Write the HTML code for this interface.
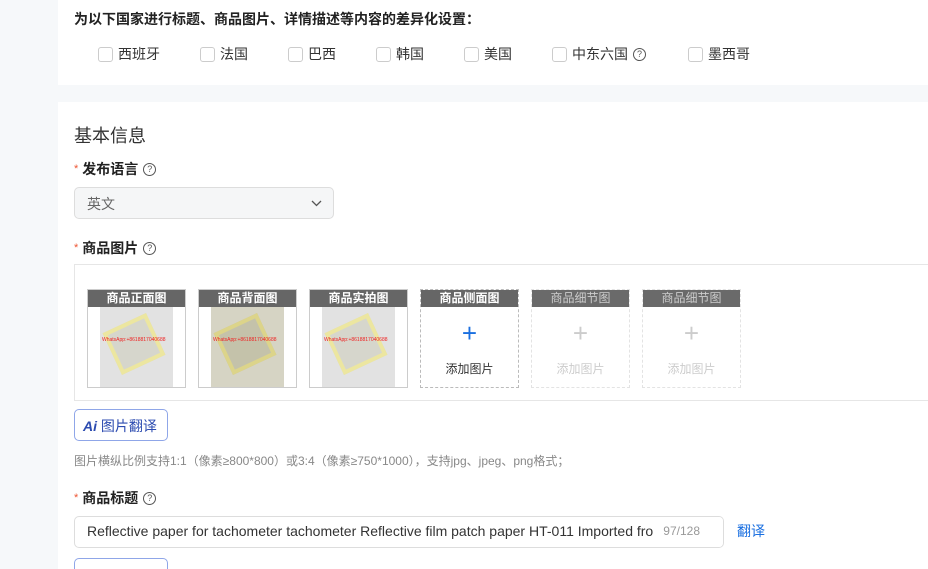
<!DOCTYPE html>
<html><head><meta charset="utf-8"><style>
*{box-sizing:border-box;margin:0;padding:0}
html,body{width:928px;height:569px;overflow:hidden}
body{background:#f6f8fa;font-family:"Liberation Sans","Noto Sans CJK SC",sans-serif;color:#333;position:relative}
.card{position:absolute;left:58px;right:0;background:#fff}
.abs{position:absolute;white-space:nowrap}
.cb{position:absolute;top:44px;font-size:14px;color:#333;display:flex;align-items:center}
.cb i{display:inline-block;width:15px;height:15px;border:1px solid #ccc;border-radius:3px;margin-right:5px}
.q{display:inline-block;width:13px;height:13px;border:1px solid #555;border-radius:50%;font-size:9px;line-height:11px;text-align:center;font-style:normal;color:#555;margin-left:5px;font-weight:normal}
.lbl{font-size:14px;font-weight:bold;color:#222;display:flex;align-items:center}
.lbl b{color:#e53;font-size:11px;margin-right:4px;font-weight:normal}
.th{position:absolute;top:289px;width:99px;height:99px;border:1px solid #ccc;background:#fff;overflow:hidden}
.th .h{position:absolute;top:0;left:0;right:0;height:17px;background:#666;color:#fff;font-size:12px;text-align:center;line-height:17px;font-weight:bold;z-index:2}
.th.d{border:1px dashed #bbb}
.th.e{border:1px dashed #e3e3e3}
.th.e .h{color:#ccc;font-weight:normal;background:#6a6a6a}
.ph{position:absolute;left:12px;top:17px;width:73px;height:82px;background:#e2e2e2}
.ph .y{position:absolute;left:10px;top:14px;width:48px;height:46px;border:4px solid #ece6a0;background:#d6d6cc;transform:rotate(-25deg)}
.ph .t{position:absolute;left:2px;top:30px;font-size:5px;color:#e22;z-index:1}
.plus{position:absolute;top:30px;width:100%;text-align:center;font-size:26px;line-height:26px;color:#1a6fe0}
.add{position:absolute;top:70px;width:100%;text-align:center;font-size:12px;color:#333}
.e .plus{color:#ccc}.e .add{color:#ccc}
</style></head><body>
<div class="card" style="top:0;height:85px">
 <div class="abs" style="left:16px;top:9px;font-size:14px;font-weight:bold;color:#222">为以下国家进行标题、商品图片、详情描述等内容的差异化设置：</div>
 <div class="cb" style="left:40px"><i></i>西班牙</div>
 <div class="cb" style="left:142px"><i></i>法国</div>
 <div class="cb" style="left:230px"><i></i>巴西</div>
 <div class="cb" style="left:318px"><i></i>韩国</div>
 <div class="cb" style="left:406px"><i></i>美国</div>
 <div class="cb" style="left:494px"><i></i>中东六国<span class="q">?</span></div>
 <div class="cb" style="left:630px"><i></i>墨西哥</div>
</div>
<div class="card" style="top:102px;height:480px"></div>
<div class="abs" style="left:74px;top:122px;font-size:18px;color:#333">基本信息</div>
<div class="abs lbl" style="left:74px;top:159px"><b>*</b>发布语言<span class="q">?</span></div>
<div class="abs" style="left:74px;top:187px;width:260px;height:32px;border:1px solid #ddd;border-radius:5px;background:#f5f6f7;font-size:14px;color:#666;padding:6px 12px">英文<svg style="position:absolute;right:11px;top:11px" width="11" height="8" viewBox="0 0 11 8"><path d="M1 2l4.5 4.5L10 2" stroke="#555" fill="none" stroke-width="1.3"/></svg></div>
<div class="abs lbl" style="left:74px;top:238px"><b>*</b>商品图片<span class="q">?</span></div>
<div class="abs" style="left:74px;top:264px;width:900px;height:137px;border:1px solid #e6e6e6"></div>
<!-- The product photos are approximated with CSS shapes; raster images were not allowed -->
<div class="th" style="left:87px"><div class="h">商品正面图</div><div class="ph"><div class="y"></div><div class="t">WhatsApp:+8618817040688</div></div></div>
<div class="th" style="left:198px"><div class="h">商品背面图</div><div class="ph" style="background:#d6d4c4"><div class="y" style="background:#c4c2aa;border-color:#dcd48a"></div><div class="t">WhatsApp:+8618817040688</div></div></div>
<div class="th" style="left:309px"><div class="h">商品实拍图</div><div class="ph"><div class="y"></div><div class="t">WhatsApp:+8618817040688</div></div></div>
<div class="th d" style="left:420px"><div class="h">商品侧面图</div><div class="plus">+</div><div class="add">添加图片</div></div>
<div class="th e" style="left:531px"><div class="h">商品细节图</div><div class="plus">+</div><div class="add">添加图片</div></div>
<div class="th e" style="left:642px"><div class="h">商品细节图</div><div class="plus">+</div><div class="add">添加图片</div></div>
<div class="abs" style="left:74px;top:409px;width:94px;height:32px;border:1px solid #8fa6e8;border-radius:5px;font-size:14px;color:#2c4bb0;padding:6px 8px"><b style="font-style:italic">Ai</b> 图片翻译</div>
<div class="abs" style="left:74px;top:452px;font-size:12px;color:#888">图片横纵比例支持1:1（像素≥800*800）或3:4（像素≥750*1000），支持jpg、jpeg、png格式；</div>
<div class="abs lbl" style="left:74px;top:488px"><b>*</b>商品标题<span class="q">?</span></div>
<div class="abs" style="left:74px;top:516px;width:650px;height:32px;border:1px solid #ddd;border-radius:5px;font-size:14px;color:#333;padding:6px 12px;overflow:hidden">Reflective paper for tachometer tachometer Reflective film patch paper HT-011 Imported fro<span style="position:absolute;right:0;top:0;height:30px;background:#fff;padding:7px 23px 0 10px;font-size:12px;color:#999">97/128</span></div>
<div class="abs" style="left:737px;top:521px;font-size:14px;color:#1a6fe0">翻译</div>
<div class="abs" style="left:74px;top:558px;width:94px;height:30px;border:1px solid #8fa6e8;border-radius:5px"></div>
</body></html>
